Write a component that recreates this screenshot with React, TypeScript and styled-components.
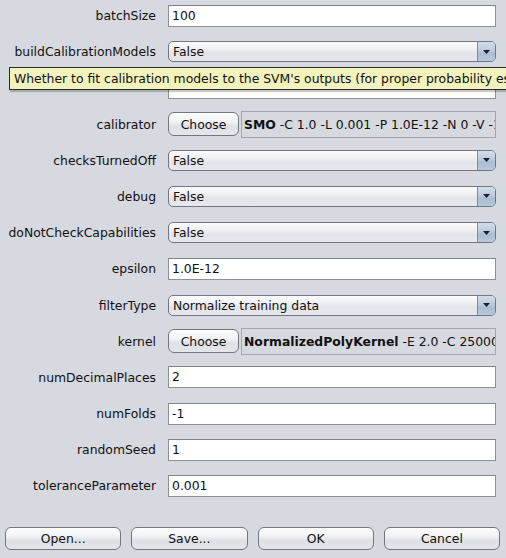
import React from 'react';
import styled, { createGlobalStyle, css } from 'styled-components';

const GlobalStyle = createGlobalStyle`
	html, body {
		margin: 0;
		padding: 0;
		background: #d6d9df;
		overflow: hidden;
	}
	body {
		font-family: 'DejaVu Sans', 'Liberation Sans', sans-serif;
		font-size: 12.4px;
		color: #111;
	}
`;

const Dialog = styled.div`
	position: relative;
	width: 506px;
	height: 558px;
	display: flex;
	flex-direction: column;
	overflow: hidden;
`;

const PropertyGrid = styled.div`
	display: grid;
	grid-template-columns: 156px minmax(0, 1fr);
	grid-auto-rows: 36.2px;
	column-gap: 12px;
	align-items: center;
	margin-top: -2.6px;
	padding-right: 10px;
`;

const Label = styled.div`
	text-align: right;
	white-space: nowrap;
`;

const TextField = styled.div`
	height: 20px;
	line-height: 20px;
	border: 1px solid #8d8f93;
	border-top-color: #7f8186;
	background: #fff;
	padding-left: 3px;
	white-space: nowrap;
	overflow: hidden;
`;

const Combo = styled.div`
	height: 19px;
	line-height: 19px;
	border: 1px solid #6f7785;
	border-radius: 5px;
	background: linear-gradient(#fbfbfc 0%, #f0f1f3 35%, #e1e4e9 60%, #e6e8ec 100%);
	padding-left: 4px;
	display: flex;
	align-items: center;
	overflow: hidden;
`;

const ComboText = styled.span`
	flex: 1;
	white-space: nowrap;
`;

const ArrowButton = styled.div`
	width: 17px;
	align-self: stretch;
	border-left: 1px solid #7d8ca3;
	background: linear-gradient(#d3dde9 0%, #bccbdd 45%, #a9bdd4 60%, #b7c8dc 100%);
	display: flex;
	align-items: center;
	justify-content: center;
`;

const Chooser = styled.div`
	display: flex;
	align-items: center;
	gap: 2px;
	min-width: 0;
`;

const roundedButton = css`
	border: 1px solid #72767e;
	border-radius: 6px;
	background: linear-gradient(#fdfdfd 0%, #f1f2f4 40%, #dde0e5 60%, #e4e6ea 100%);
	display: flex;
	align-items: center;
	justify-content: center;
	white-space: nowrap;
`;

const ChooseButton = styled.div`
	${roundedButton};
	width: 69px;
	height: 22px;
	flex: none;
`;

const ValueBox = styled.div`
	flex: 1;
	min-width: 0;
	height: 25px;
	line-height: 25px;
	border: 1px solid #a3a6ab;
	padding-left: 2px;
	white-space: nowrap;
	overflow: hidden;
	b {
		font-weight: bold;
	}
`;

const Tooltip = styled.div`
	position: absolute;
	left: 9px;
	top: 67px;
	height: 21px;
	line-height: 21px;
	width: 620px;
	padding-left: 4px;
	background: #f2f2bd;
	border: 1px solid #2a2a2a;
	box-shadow: 1px 2px 1px rgba(0, 0, 0, 0.22);
	white-space: nowrap;
`;

const ButtonBar = styled.div`
	margin-top: auto;
	margin-bottom: 8px;
	padding: 0 6px 0 5px;
	display: grid;
	grid-template-columns: repeat(4, 1fr);
	column-gap: 10px;
`;

const DialogButton = styled.div`
	${roundedButton};
	height: 21px;
`;

type Prop =
	| { name: string; kind: 'text'; value: string }
	| { name: string; kind: 'combo'; value: string }
	| { name: string; kind: 'object'; head: string; args: string };

const props: Prop[] = [
	{ name: 'batchSize', kind: 'text', value: '100' },
	{ name: 'buildCalibrationModels', kind: 'combo', value: 'False' },
	{ name: 'c', kind: 'text', value: '' },
	{ name: 'calibrator', kind: 'object', head: 'SMO', args: ' -C 1.0 -L 0.001 -P 1.0E-12 -N 0 -V -1 -W 1 -K' },
	{ name: 'checksTurnedOff', kind: 'combo', value: 'False' },
	{ name: 'debug', kind: 'combo', value: 'False' },
	{ name: 'doNotCheckCapabilities', kind: 'combo', value: 'False' },
	{ name: 'epsilon', kind: 'text', value: '1.0E-12' },
	{ name: 'filterType', kind: 'combo', value: 'Normalize training data' },
	{ name: 'kernel', kind: 'object', head: 'NormalizedPolyKernel', args: ' -E 2.0 -C 250007' },
	{ name: 'numDecimalPlaces', kind: 'text', value: '2' },
	{ name: 'numFolds', kind: 'text', value: '-1' },
	{ name: 'randomSeed', kind: 'text', value: '1' },
	{ name: 'toleranceParameter', kind: 'text', value: '0.001' },
];

const Arrow = () => (
	<svg width="7" height="4" viewBox="0 0 7 4">
		<path d="M0 0 H7 L3.5 4 Z" fill="#1b1f27" />
	</svg>
);

function renderEditor(p: Prop) {
	if (p.kind === 'text') return <TextField>{p.value}</TextField>;
	if (p.kind === 'combo')
		return (
			<Combo>
				<ComboText>{p.value}</ComboText>
				<ArrowButton>
					<Arrow />
				</ArrowButton>
			</Combo>
		);
	return (
		<Chooser>
			<ChooseButton>Choose</ChooseButton>
			<ValueBox>
				<b>{p.head}</b>
				{p.args}
			</ValueBox>
		</Chooser>
	);
}

export default function App() {
	return (
		<Dialog>
			<GlobalStyle />
			<PropertyGrid>
				{props.map((p) => (
					<React.Fragment key={p.name}>
						<Label>{p.name === 'c' ? '' : p.name}</Label>
						{renderEditor(p)}
					</React.Fragment>
				))}
			</PropertyGrid>
			<Tooltip>Whether to fit calibration models to the SVM's outputs (for proper probability estimates).</Tooltip>
			<ButtonBar>
				<DialogButton>Open...</DialogButton>
				<DialogButton>Save...</DialogButton>
				<DialogButton>OK</DialogButton>
				<DialogButton>Cancel</DialogButton>
			</ButtonBar>
		</Dialog>
	);
}
